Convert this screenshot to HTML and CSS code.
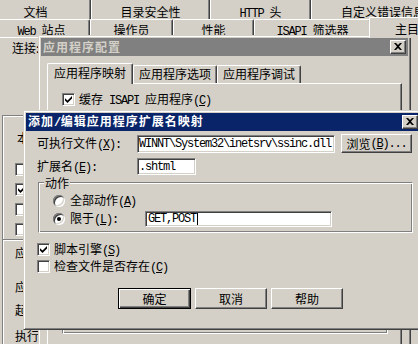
FILE: index.html
```html
<!DOCTYPE html>
<html lang="zh-CN">
<head>
  <meta charset="UTF-8">
  <meta name="viewport" content="width=device-width, initial-scale=1.0">
  <title>添加/编辑应用程序扩展名映射</title>
  <link rel="stylesheet" href="styles.css">
</head>
<body>
  <!-- 背后的属性页：主目录 -->
  <div class="sheet">
    <div class="tabrow back">
      <div class="tab">文档</div>
      <div class="tab">目录安全性</div>
      <div class="tab"><span class="en">HTTP </span>头</div>
      <div class="tab">自定义错误信息</div>
    </div>
    <div class="tabrow front">
      <div class="tab"><span class="en">Web </span>站点</div>
      <div class="tab">操作员</div>
      <div class="tab">性能</div>
      <div class="tab"><span class="en">ISAPI </span>筛选器</div>
      <div class="tab on">主目录</div>
    </div>
    <div class="page">
      <div class="conn">连接:</div>
      <div class="edge src">
        <div class="local">本地路径</div>
        <div class="cbx"></div>
        <div class="cbx"><svg width="7" height="7" viewBox="0 0 7 7"><path d="M0 2.2L2.5 4.6 7 0v2.6L2.5 7 0 4.6z"/></svg></div>
        <div class="cbx"></div>
        <div class="cbx"></div>
      </div>
      <div class="edge appset">
        <div class="ln">应用程序名</div>
        <div class="ln l2">应用程序保护</div>
        <div class="ln l3">起始点</div>
        <div class="ln l4">执行许可</div>
      </div>
    </div>
  </div>

  <!-- 应用程序配置（非活动） -->
  <div class="win cfg">
    <div class="caption idle">
      <span>应用程序配置</span>
      <div class="xbtn"><svg width="8" height="7" viewBox="0 0 8 7"><path d="M0 0h2l2 2 2-2h2L5 3.5 8 7H6L4 5 2 7H0l3-3.5z"/></svg></div>
    </div>
    <div class="client">
      <div class="subtabs">
        <div class="subtab on">应用程序映射</div>
        <div class="subtab">应用程序选项</div>
        <div class="subtab">应用程序调试</div>
      </div>
      <div class="subpanel">
        <div class="opt">
          <div class="cbx"><svg width="7" height="7" viewBox="0 0 7 7"><path d="M0 2.2L2.5 4.6 7 0v2.6L2.5 7 0 4.6z"/></svg></div>
          <span>缓存<span class="en"> ISAPI </span>应用程序<span class="en">(<u>C</u>)</span></span>
        </div>
        <div class="edge maplist"></div>
      </div>
    </div>
  </div>

  <!-- 添加/编辑应用程序扩展名映射（活动） -->
  <div class="win map">
    <div class="caption">
      <span>添加<span class="en">/</span>编辑应用程序扩展名映射</span>
      <div class="xbtn"><svg width="8" height="7" viewBox="0 0 8 7"><path d="M0 0h2l2 2 2-2h2L5 3.5 8 7H6L4 5 2 7H0l3-3.5z"/></svg></div>
    </div>
    <div class="client">
      <div class="row exe">
        <span class="field-label">可执行文件<span class="en">(<u>X</u>):</span></span>
        <div class="edit path"><span class="en">WINNT\System32\inetsrv\ssinc.dll</span></div>
        <div class="btn browse">浏览<span class="en">(<u>B</u>)...</span></div>
      </div>
      <div class="row ext">
        <span class="field-label">扩展名<span class="en">(<u>E</u>):</span></span>
        <div class="edit suffix"><span class="en">.shtml</span></div>
      </div>
      <div class="edge grp">
        <span class="grp-title">动作</span>
        <div class="choice">
          <div class="radio"></div>
          <span>全部动作<span class="en">(<u>A</u>)</span></span>
        </div>
        <div class="choice limit">
          <div class="radio on"></div>
          <span class="choice-label">限于<span class="en">(<u>L</u>):</span></span>
          <div class="edit verbs"><span class="en">GET,POST</span><span class="caret"></span></div>
        </div>
      </div>
      <div class="opt first">
        <div class="cbx"><svg width="7" height="7" viewBox="0 0 7 7"><path d="M0 2.2L2.5 4.6 7 0v2.6L2.5 7 0 4.6z"/></svg></div>
        <span>脚本引擎<span class="en">(<u>S</u>)</span></span>
      </div>
      <div class="opt second">
        <div class="cbx"></div>
        <span>检查文件是否存在<span class="en">(<u>C</u>)</span></span>
      </div>
      <div class="actions">
        <div class="btn def">确定</div>
        <div class="btn">取消</div>
        <div class="btn">帮助</div>
      </div>
    </div>
  </div>
</body>
</html>
```

FILE: styles.css
```css
/* Windows 经典外观 */
html, body {
  margin: 0;
  width: 418px;
  height: 344px;
  overflow: hidden;
}

body {
  position: relative;
  background: #d4d0c8;
  color: #000;
  font: 12px/14px "Noto Sans CJK SC", "Noto Sans", sans-serif;
}

.en {
  font-family: "Liberation Mono", monospace;
  font-size: 12px;
  line-height: 14px;
  letter-spacing: -1.2px;
  white-space: pre;
}

/* 属性页标签 */
.tabrow {
  display: flex;
}

.tabrow.back {
  height: 21px;
  margin: -2px 0 0 -20px;
}

.tabrow.front {
  height: 18px;
  margin-left: -7px;
}

.tab, .subtab {
  flex: none;
  box-sizing: border-box;
  border: 1px solid;
  border-bottom: 0;
  border-color: #fff #404040 #fff #fff;
  border-radius: 2px 2px 0 0;
  box-shadow: inset -1px 0 #808080;
  text-align: center;
  white-space: nowrap;
}

.tab {
  height: 100%;
}

.back .tab { padding-top: 6px; }
.front .tab { padding-top: 3px; }

.back .tab:nth-child(1) { width: 111px; }
.back .tab:nth-child(2) { width: 119px; }
.back .tab:nth-child(3) { width: 101px; }
.back .tab:nth-child(4) { width: 144px; }

.front .tab:nth-child(1) { width: 97px; }
.front .tab:nth-child(2) { width: 83px; }
.front .tab:nth-child(3) { width: 81px; }
.front .tab:nth-child(4) { width: 117px; }

.front .tab.on {
  width: 88px;
  height: 21px;
  margin: -2px 0 0 -2px;
  padding-top: 4px;
  position: relative;
  z-index: 1;
  background: #d4d0c8;
}

.page {
  border-top: 1px solid #fff;
}

.conn {
  margin: 3px 0 0 12px;
}

.edge {
  box-sizing: border-box;
  border: 1px solid;
  border-color: #808080 #fff #fff #808080;
  box-shadow: inset 1px 1px #fff, inset -1px -1px #808080;
}

/* 左侧只露出一窄条，其余被对话框盖住 */
.src, .appset {
  border-width: 1px 0 0 1px;
  box-shadow: inset 1px 1px #fff;
  margin-left: 2px;
  padding-left: 12px;
  display: flex;
  flex-direction: column;
  align-items: flex-start;
  overflow: hidden;
}

.src {
  width: 21px;
  height: 124px;
  margin-top: 60px;
  padding-top: 15px;
}

.src .local {
  margin: 0 0 18px 2px;
  white-space: nowrap;
}

.src .cbx + .cbx {
  margin-top: 7px;
}

.appset {
  width: 36px;
  height: 120px;
  padding-top: 6px;
}

.appset .ln { white-space: nowrap; }
.appset .l2 { margin-top: 20px; }
.appset .l3 { margin-top: 9px; }
.appset .l4 { margin-top: 12px; }

/* 窗口 */
.win {
  position: absolute;
  box-sizing: border-box;
  border: 1px solid;
  border-color: #d4d0c8 #404040 #404040 #d4d0c8;
  box-shadow: inset 1px 1px #fff, inset -1px -1px #808080;
  padding: 2px;
  background: #d4d0c8;
}

.cfg {
  left: 38px;
  top: 35px;
  width: 373px;
  height: 330px;
}

.map {
  left: 23px;
  top: 110px;
  width: 400px;
  height: 220px;
}

.caption {
  display: flex;
  align-items: center;
  justify-content: space-between;
  height: 18px;
  padding: 0 2px 0 2px;
  background: #0a246a;
  color: #fff;
  font-weight: bold;
  letter-spacing: 1px;
  white-space: nowrap;
}

.caption .en {
  letter-spacing: -0.6px;
}

.caption.idle {
  background: #808080;
  color: #d4d0c8;
}

.xbtn, .btn {
  box-sizing: border-box;
  display: flex;
  align-items: center;
  justify-content: center;
  background: #d4d0c8;
  color: #000;
  border: 1px solid;
  border-color: #fff #404040 #404040 #fff;
  box-shadow: inset -1px -1px #808080;
  font-weight: normal;
  letter-spacing: 0;
}

.xbtn {
  width: 16px;
  height: 14px;
  padding: 0 1px 1px 0;
}

/* 应用程序配置 */
.cfg .client {
  padding: 7px 0 0 6px;
}

.subtabs {
  display: flex;
  height: 20px;
}

.subtab {
  width: 84px;
  height: 18px;
  margin-top: 2px;
  padding-top: 1px;
}

.subtab.on {
  width: 86px;
  height: 21px;
  margin-top: 0;
  padding-top: 2px;
  position: relative;
  z-index: 1;
  background: #d4d0c8;
}

.subpanel {
  box-sizing: border-box;
  width: 355px;
  height: 270px;
  border: 1px solid;
  border-color: #fff #404040 #404040 #fff;
  box-shadow: inset -1px -1px #808080;
  padding: 9px 0 0 14px;
}

.opt {
  display: flex;
  align-items: center;
  gap: 4px;
  height: 13px;
  white-space: nowrap;
}

.maplist {
  width: 326px;
  height: 221px;
  margin-top: 7px;
}

/* 控件 */
.cbx {
  flex: none;
  box-sizing: border-box;
  width: 13px;
  height: 13px;
  background: #fff;
  border: 1px solid;
  border-color: #808080 #fff #fff #808080;
  box-shadow: inset 1px 1px #404040, inset -1px -1px #d4d0c8;
  display: flex;
  align-items: center;
  justify-content: center;
}

.radio {
  flex: none;
  width: 12px;
  height: 12px;
  border-radius: 50%;
  background: #fff;
  box-shadow: inset 1px 1px #808080, inset -1px -1px #fff, inset 2px 2px #404040, inset -2px -2px #d4d0c8;
  display: flex;
  align-items: center;
  justify-content: center;
}

.radio.on::after {
  content: "";
  width: 4px;
  height: 4px;
  border-radius: 50%;
  background: #000;
}

.edit {
  flex: none;
  box-sizing: border-box;
  display: flex;
  align-items: center;
  padding-left: 1px;
  background: #fff;
  border: 1px solid;
  border-color: #808080 #fff #fff #808080;
  box-shadow: inset 1px 1px #404040, inset -1px -1px #d4d0c8;
  overflow: hidden;
  white-space: nowrap;
}

.caret {
  width: 1px;
  height: 12px;
  margin-left: 1px;
  background: #000;
}

/* 添加/编辑映射 */
.map .client {
  padding: 3px 0 0 11px;
}

.row {
  display: flex;
  align-items: center;
}

.field-label {
  flex: 0 0 100px;
  white-space: nowrap;
}

.row.exe { height: 19px; }

.edit.path {
  width: 198px;
  height: 18px;
}

.btn.browse {
  width: 71px;
  height: 19px;
  margin-left: 6px;
}

.row.ext {
  height: 17px;
  margin-top: 5px;
}

.edit.suffix {
  width: 59px;
  height: 17px;
}

.grp {
  position: relative;
  width: 375px;
  height: 51px;
  margin: 7px 0 0 1px;
  padding: 11px 0 0 14px;
}

.grp-title {
  position: absolute;
  top: -7px;
  left: 5px;
  padding: 0 1px;
  background: #d4d0c8;
}

.choice {
  display: flex;
  align-items: center;
  gap: 5px;
  height: 14px;
  white-space: nowrap;
}

.choice.limit {
  height: 16px;
  margin-top: 3px;
}

.choice-label {
  width: 70px;
}

.edit.verbs {
  width: 187px;
  height: 16px;
  padding-left: 2px;
}

.opt.first { margin-top: 10px; }
.opt.second { margin-top: 4px; }

.actions {
  display: flex;
  gap: 4px;
  margin: 15px 0 0 81px;
}

.btn {
  width: 72px;
  height: 21px;
}

.btn.def {
  width: 73px;
  border-color: #000;
  box-shadow: inset 1px 1px #fff, inset -1px -1px #404040, inset -2px -2px #808080;
}
```
